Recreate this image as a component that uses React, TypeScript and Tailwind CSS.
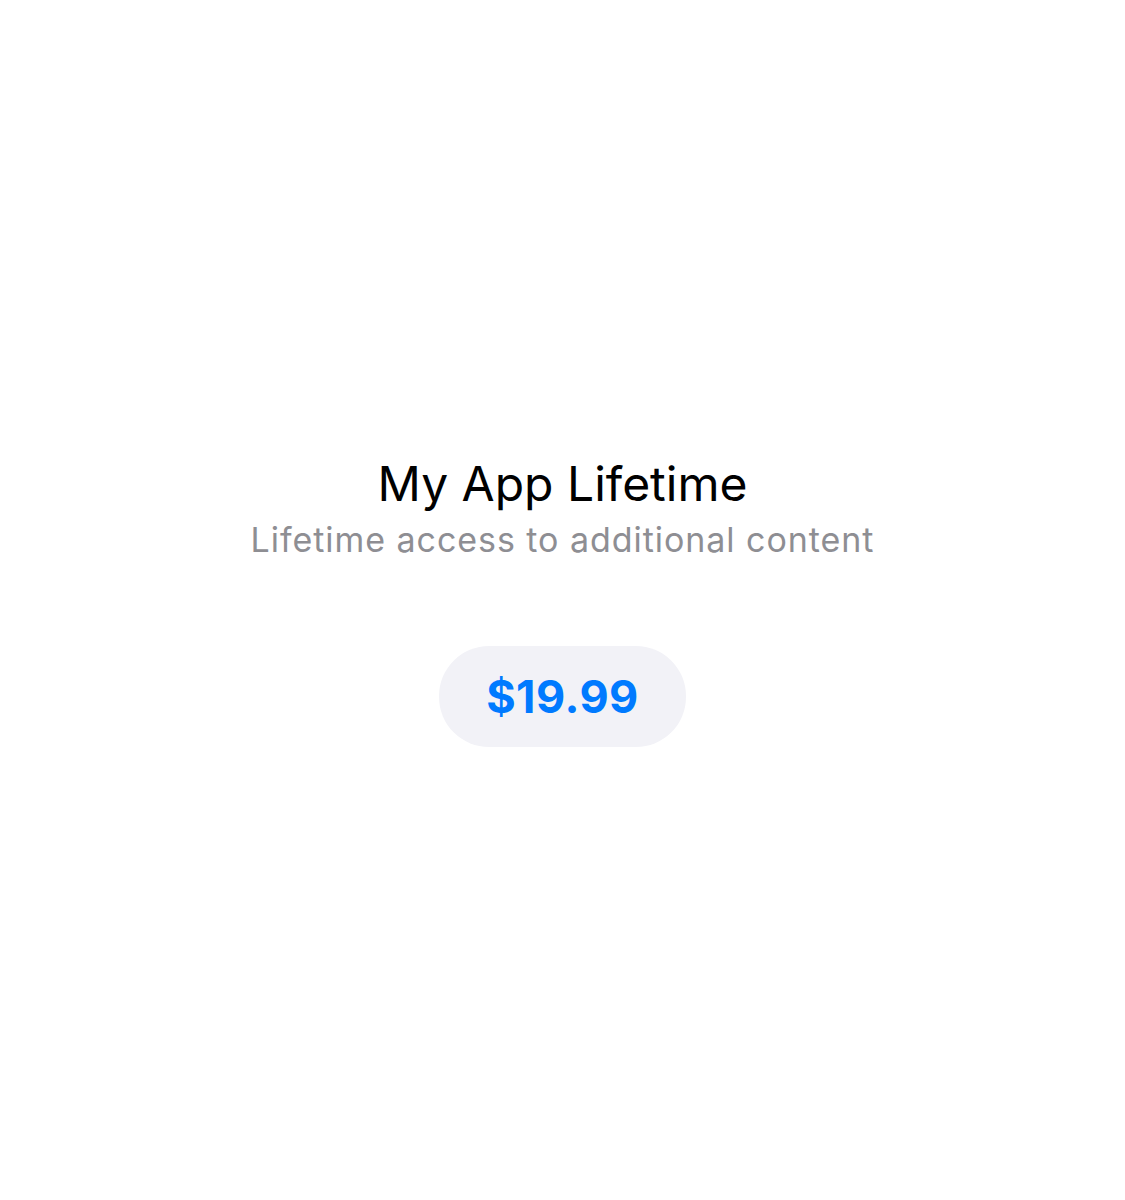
export default function App() {
  return (
    <div className="flex h-[1200px] w-full flex-col items-center justify-center bg-white font-['Inter',sans-serif]">
      <h1 className="mt-[3px] text-[48px] leading-[56px] font-normal text-black">My App Lifetime</h1>
      <p className="mt-[8px] text-[34px] leading-[40px] tracking-[0.95px] text-[#8e8e93]">Lifetime access to additional content</p>
      <button className="mt-[86px] flex h-[101px] w-[247px] items-center justify-center rounded-[50px] bg-[#f2f2f7] text-[45px] font-bold tracking-[0.5px] text-[#007aff]">
        $19.99
      </button>
    </div>
  );
}
